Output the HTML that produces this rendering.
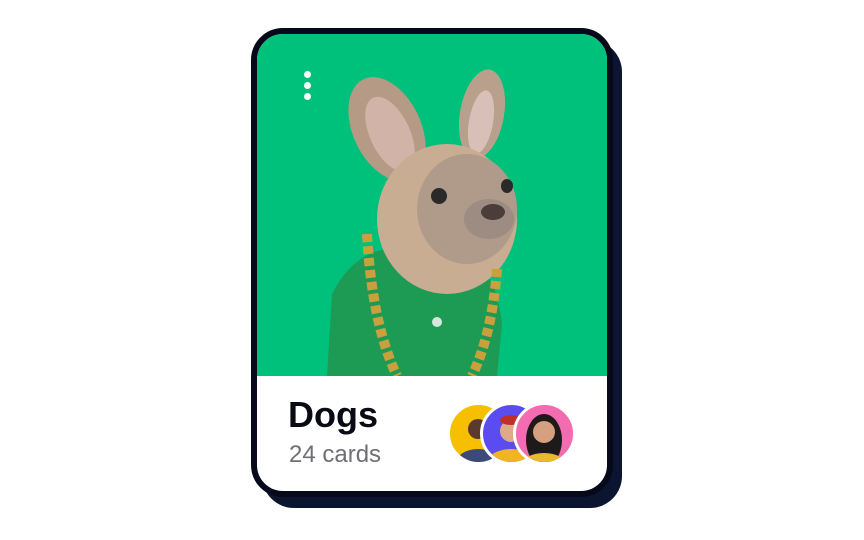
<!DOCTYPE html>
<html><head><style>
body{margin:0;width:864px;height:540px;background:#fff;position:relative;overflow:hidden;font-family:"Liberation Sans",sans-serif}
.shadow{position:absolute;left:262px;top:40px;width:360px;height:468px;border-radius:32px;background:#0b1530}
.card{position:absolute;left:251px;top:28px;width:350px;height:457px;border:6px solid #06091a;border-radius:32px;background:#fff;overflow:hidden}
.img{position:absolute;left:0;top:0;width:350px;height:342px;background:#00c17b;overflow:hidden}
.dots i{position:absolute;left:47px;width:7px;height:7px;border-radius:50%;background:#fff}
h1{position:absolute;left:31px;top:360px;margin:0;font-size:36px;font-weight:bold;color:#0a0a14}
.sub{position:absolute;left:32px;top:407px;font-size:24px;color:#6f6f74}
.av{position:absolute;top:368px;width:57px;height:57px;border-radius:50%;border:3px solid #fff;overflow:hidden}
</style></head><body>
<div class="shadow"></div>
<div class="card">
 <div class="img">
  <svg width="350" height="342" viewBox="0 0 350 342">
   <ellipse cx="130" cy="95" rx="34" ry="55" fill="#b59a85" transform="rotate(-25 130 95)"/>
   <ellipse cx="133" cy="100" rx="20" ry="40" fill="#d2b3a8" transform="rotate(-25 133 100)"/>
   <ellipse cx="225" cy="80" rx="22" ry="45" fill="#b9a08c" transform="rotate(10 225 80)"/>
   <ellipse cx="224" cy="88" rx="12" ry="32" fill="#d8c0b8" transform="rotate(10 224 88)"/>
   <path d="M70 342 L75 260 Q95 220 130 215 L210 220 Q240 240 245 290 L240 342Z" fill="#1d9b55"/>
   <ellipse cx="190" cy="185" rx="70" ry="75" fill="#c9ad92"/>
   <ellipse cx="210" cy="175" rx="50" ry="55" fill="#b09a8a"/>
   <ellipse cx="232" cy="185" rx="25" ry="20" fill="#9d8c82"/>
   <ellipse cx="182" cy="162" rx="8" ry="8" fill="#2a2a2a"/>
   <ellipse cx="250" cy="152" rx="6" ry="7" fill="#2a2a2a"/>
   <ellipse cx="236" cy="178" rx="12" ry="8" fill="#4a3d3a"/>
   <path d="M110 200 Q115 290 140 342" stroke="#c8a13c" stroke-width="10" fill="none" stroke-dasharray="8 4"/>
   <path d="M240 235 Q235 300 215 342" stroke="#c8a13c" stroke-width="10" fill="none" stroke-dasharray="8 4"/>
   <ellipse cx="180" cy="288" rx="5" ry="5" fill="#d6e8dc"/>
  </svg>
  <div class="dots"><i style="top:37px"></i><i style="top:48px"></i><i style="top:59px"></i></div>
 </div>
 <h1>Dogs</h1>
 <div class="sub">24 cards</div>
 <div class="av" style="left:190px;background:#f6c000"><svg width="57" height="57"><circle cx="28" cy="24" r="10" fill="#5a3a2a"/><ellipse cx="28" cy="58" rx="22" ry="14" fill="#3c4a7a"/></svg></div>
 <div class="av" style="left:223px;background:#5a4cf0"><svg width="57" height="57"><circle cx="28" cy="26" r="11" fill="#e0a98a"/><ellipse cx="28" cy="15" rx="11" ry="5" fill="#c0302a"/><ellipse cx="28" cy="58" rx="24" ry="14" fill="#f2b420"/></svg></div>
 <div class="av" style="left:256px;background:#f36bb0"><svg width="57" height="57"><ellipse cx="28" cy="35" rx="18" ry="26" fill="#1f1a1a"/><circle cx="28" cy="27" r="11" fill="#d4a080"/><ellipse cx="28" cy="60" rx="22" ry="12" fill="#e8b830"/></svg></div>
</div>
</body></html>
